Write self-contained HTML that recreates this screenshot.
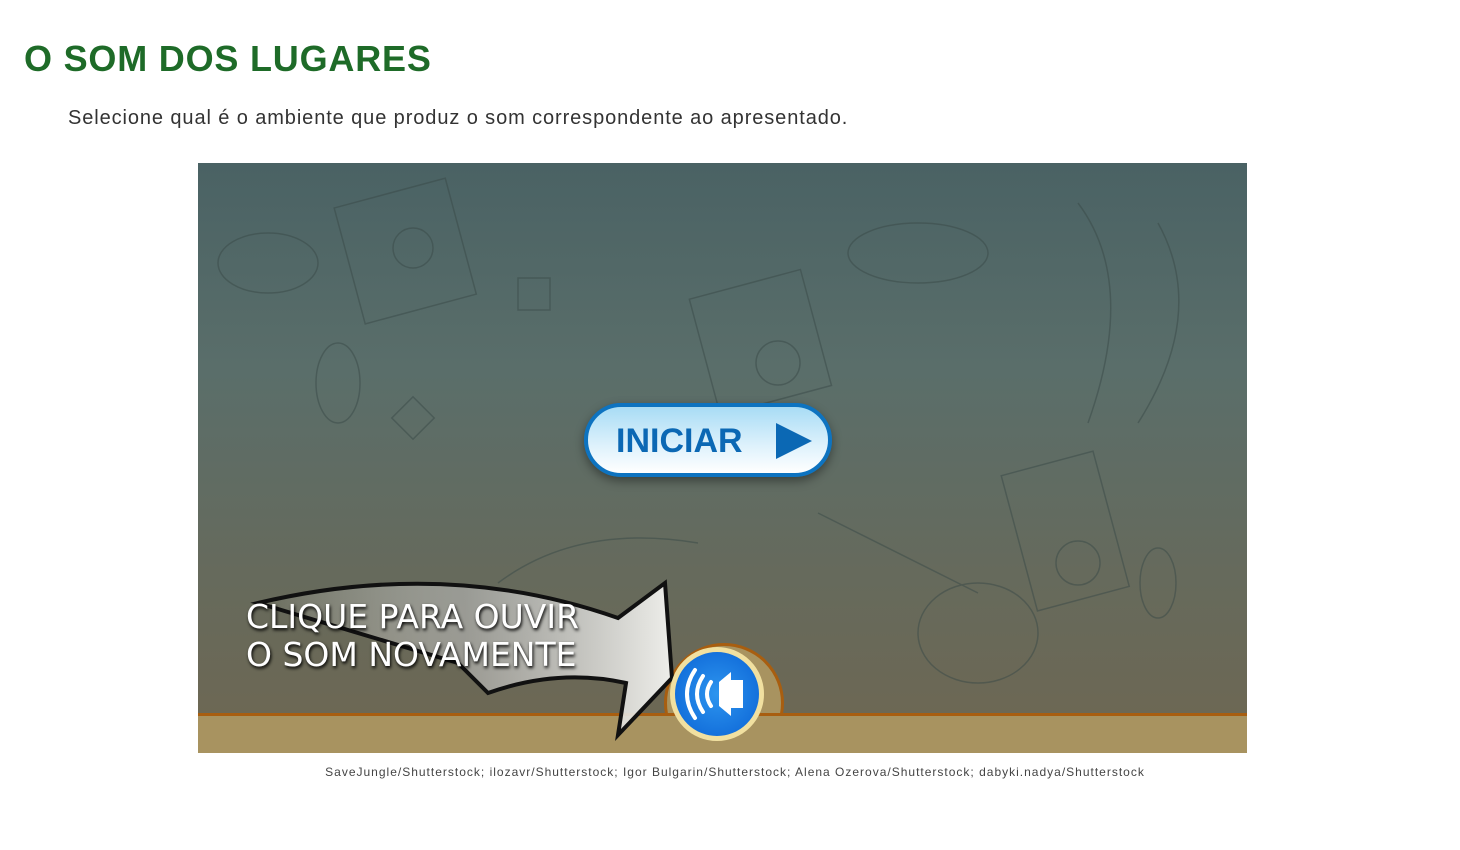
<!DOCTYPE html>
<html><head><meta charset="utf-8"><style>
body{margin:0;width:1460px;height:850px;background:#fff;font-family:"Liberation Sans",sans-serif;position:relative;overflow:hidden}
h1{position:absolute;left:24px;top:38px;margin:0;font-size:36px;font-weight:bold;color:#1e6b28;letter-spacing:0.8px}
.sub{position:absolute;left:68px;top:107px;font-size:20px;color:#333;letter-spacing:0.9px}
.stage{position:absolute;left:198px;top:163px;width:1049px;height:590px;overflow:hidden;background:linear-gradient(#4a6264 0%,#5a6e6a 35%,#666a5c 70%,#6e6752 100%)}
.band{position:absolute;left:0;top:550px;width:1049px;height:40px;background:#a89360;border-top:3px solid #a85e10}
.hump{position:absolute;left:466px;top:480px;width:114px;height:114px;border-radius:50%;background:#a89360;border:3px solid #a85e10}
.btn{position:absolute;left:386px;top:240px;width:248px;height:74px;border-radius:40px;border:4px solid #0d73c0;box-sizing:border-box;background:linear-gradient(#a8dcf5,#dff2fc 60%,#fff);box-shadow:0 4px 10px rgba(0,0,0,.4)}
.btn span{position:absolute;left:28px;top:15px;font-size:34px;font-weight:900;color:#0b68b4}
.tri{position:absolute;left:188px;top:16px;width:0;height:0;border-left:36px solid #0b68b4;border-top:18px solid transparent;border-bottom:18px solid transparent}
.spk{position:absolute;left:472px;top:484px;width:94px;height:94px;border-radius:50%;background:radial-gradient(#2d95ef,#0a62d4);border:5px solid #f1e0a0;box-sizing:border-box}
.txt{position:absolute;left:48px;top:435px;color:#fff;font-size:33px;line-height:38px;font-family:"DejaVu Sans",sans-serif;text-shadow:1px 2px 3px #000;letter-spacing:0px}
.cr{position:absolute;left:0;width:1470px;top:765px;text-align:center;font-size:12px;color:#444;letter-spacing:1px}
</style></head><body>
<h1>O SOM DOS LUGARES</h1>
<div class="sub">Selecione qual é o ambiente que produz o som correspondente ao apresentado.</div>
<div class="stage">
<svg width="1049" height="590" style="position:absolute;left:0;top:0" fill="none" stroke="#3a4a48" stroke-width="1.5" opacity=".5">
<rect x="150" y="30" width="115" height="120" transform="rotate(-15 200 90)"/><circle cx="215" cy="85" r="20"/>
<rect x="505" y="120" width="115" height="120" transform="rotate(-15 560 180)"/><circle cx="580" cy="200" r="22"/>
<rect x="820" y="300" width="95" height="140" transform="rotate(-15 860 370)"/><circle cx="880" cy="400" r="22"/>
<ellipse cx="70" cy="100" rx="50" ry="30"/><ellipse cx="720" cy="90" rx="70" ry="30"/><ellipse cx="140" cy="220" rx="22" ry="40"/>
<path d="M880 40 q60 80 10 220 M960 60 q50 90 -20 200 M300 420 q80 -60 200 -40 M620 350 q80 40 160 80"/>
<rect x="200" y="240" width="30" height="30" transform="rotate(45 215 255)"/><rect x="320" y="115" width="32" height="32"/>
<ellipse cx="780" cy="470" rx="60" ry="50"/><ellipse cx="960" cy="420" rx="18" ry="35"/>
</svg>
<div class="hump"></div><div class="band"></div>
<svg width="1049" height="590" style="position:absolute;left:0;top:0">
<defs><linearGradient id="g" x1="0" x2="1"><stop offset="0" stop-color="#fff" stop-opacity="0"/><stop offset=".5" stop-color="#bbb" stop-opacity=".6"/><stop offset="1" stop-color="#eeeeea"/></linearGradient></defs>
<path d="M60 440 Q250 395 420 455 L467 420 L474 515 L420 572 L428 520 Q360 505 290 530 L260 500 Z" fill="url(#g)" stroke="#111" stroke-width="4" stroke-linejoin="miter"/>
</svg>
<div class="txt">CLIQUE PARA OUVIR<br>O SOM NOVAMENTE</div>
<div class="btn"><span>INICIAR</span><div class="tri"></div></div>
<div class="spk"><svg width="84" height="84" viewBox="0 0 84 84" style="position:absolute;left:0;top:0"><path d="M44 30 L56 20 L56 64 L44 54 Z M56 28 h12 v28 h-12 Z" fill="#fff"/><path d="M36 30 q-8 12 0 24 M28 24 q-12 18 0 36 M20 18 q-16 24 0 48" stroke="#fff" stroke-width="4" fill="none" stroke-linecap="round"/></svg></div>
</div>
<div class="cr">SaveJungle/Shutterstock; ilozavr/Shutterstock; Igor Bulgarin/Shutterstock; Alena Ozerova/Shutterstock; dabyki.nadya/Shutterstock</div>
</body></html>
